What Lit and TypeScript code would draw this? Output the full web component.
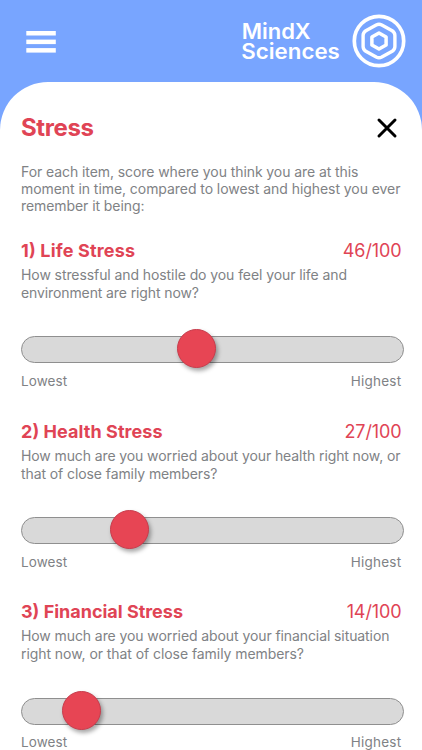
import { LitElement, html, svg, css } from "lit";
import { customElement, property } from "lit/decorators.js";

const svgLine = (text: string, width: number, y: number) =>
  svg`<text class="copy" x="0" y=${y} textLength=${width}>${text}</text>`;

@customElement("stress-slider")
class StressSlider extends LitElement {
  @property() heading = "";
  @property({ type: Array }) lines: { text: string; width: number }[] = [];
  @property({ type: Number }) level = 0;
  @property({ type: Number }) headingWidth = 100;

  static styles = css`
    :host { display: block; height: 180.6px; }
    .head { display: flex; justify-content: space-between; height: 24px; line-height: 23px; color: #e04455; padding-right: 3.5px; }
    .score { font-size: 18px; font-weight: 400; letter-spacing: -0.1px; }
    svg { display: block; overflow: visible; }
    .copy { fill: #808285; font-size: 14px; }
    .title-text { fill: #e04455; font-size: 18px; font-weight: 700; }
    .track { box-sizing: border-box; position: relative; width: 382.5px; height: 27px; margin: 38.2px 0 0 0.3px; border: 1.3px solid #8f8f8f; border-radius: 14px; background: #d9d9d9; }
    .thumb { box-sizing: border-box; position: absolute; top: -8px; width: 39px; height: 39px; border-radius: 50%; background: #e74554; border: 1.5px solid #c83c4c; box-shadow: 2px 3px 4px rgba(0, 0, 0, 0.35); }
    .ends { display: flex; justify-content: space-between; margin-top: 9.7px; font-size: 13.5px; line-height: 17px; color: #808285; padding-right: 3.6px; }
    .low { letter-spacing: 0.1px; }
    .high { letter-spacing: 0.25px; }
  `;

  render() {
    return html`
      <div class="head">
        <svg width="240" height="24"><text class="title-text" x="0" y="17.8" textLength=${this.headingWidth}>${this.heading}</text></svg>
        <span class="score">${Math.round(this.level)}/100</span>
      </div>
      <svg width="380" height="35">
        ${this.lines.map((l, i) => svgLine(l.text, l.width, 17.4 + i * 17.2))}
      </svg>
      <div class="track"><div class="thumb" style="left:${this.level * 3.59 - 10.4}px"></div></div>
      <div class="ends"><span class="low">Lowest</span><span class="high">Highest</span></div>
    `;
  }
}

@customElement("app-root")
class AppRoot extends LitElement {
  static styles = css`
    :host { display: block; width: 422px; height: 750px; overflow: hidden; background: #78a5ff; font-family: Inter, "Liberation Sans", sans-serif; }
    header { box-sizing: border-box; height: 82px; display: flex; justify-content: space-between; padding: 14px 16px 0 26px; }
    svg { display: block; overflow: visible; }
    .menu { margin-top: 16.7px; }
    .brand { display: flex; gap: 13px; }
    .logo-text { fill: #fff; font-size: 21px; font-weight: 600; }
    main { box-sizing: border-box; height: 680px; background: #fff; border-radius: 48px 48px 0 0; padding: 32px 17px 0 21px; }
    .top { display: flex; justify-content: space-between; height: 46px; }
    .title { fill: #e04455; font-size: 24px; font-weight: 700; }
    .close { margin: 4px 8.3px 0 0; }
    .copy { fill: #808285; font-size: 14px; }
    .intro { margin-bottom: 21.2px; }
  `;

  render() {
    return html`
      <header>
        <svg class="menu" width="30" height="22" fill="#fff">
          <rect x="0.3" width="29.5" height="4.5" /><rect x="0.3" y="8.6" width="29.5" height="4.5" /><rect x="0.3" y="17.1" width="29.5" height="4.5" />
        </svg>
        <div class="brand">
          <svg width="98" height="54">
            <text class="logo-text" x="0.7" y="24.6" textLength="69" lengthAdjust="spacingAndGlyphs">MindX</text>
            <text class="logo-text" x="0.3" y="44.8" textLength="98.5" lengthAdjust="spacingAndGlyphs">Sciences</text>
          </svg>
          <svg width="54" height="54" viewBox="0 0 54 54" fill="none" stroke="#fff" stroke-linejoin="round">
            <circle cx="27" cy="27" r="24.7" stroke-width="3.7" />
            <path d="M24.2 10.9Q27 9.5 29.8 10.9L40.2 16.7Q42.9 18.4 42.9 21.4V32.6Q42.9 35.6 40.2 37.3L29.8 43.1Q27 44.5 24.2 43.1L13.8 37.3Q11.1 35.6 11.1 32.6V21.4Q11.1 18.4 13.8 16.7Z" stroke-width="3.4" />
            <path d="M27 18.9L34.1 23V31L27 35.1L19.9 31V23Z" stroke-width="3.5" />
          </svg>
        </div>
      </header>
      <main>
        <div class="top">
          <svg width="80" height="30"><text class="title" x="0" y="22" textLength="73">Stress</text></svg>
          <svg class="close" width="20" height="20" fill="none" stroke="#000" stroke-width="3" stroke-linecap="round"><path d="M2 2L18 18M18 2L2 18" /></svg>
        </div>
        <svg class="intro" width="380" height="58">
          ${svgLine("For each item, score where you think you are at this", 337.5, 17)}
          ${svgLine("moment in time, compared to lowest and highest you ever", 379.5, 34.2)}
          ${svgLine("remember it being:", 123.5, 51.4)}
        </svg>
        <stress-slider heading="1) Life Stress" .headingWidth=${114} .level=${46}
          .lines=${[{ text: "How stressful and hostile do you feel your life and", width: 326 }, { text: "environment are right now?", width: 178 }]}></stress-slider>
        <stress-slider heading="2) Health Stress" .headingWidth=${141.5} .level=${27.2}
          .lines=${[{ text: "How much are you worried about your health right now, or", width: 379.5 }, { text: "that of close family members?", width: 196.5 }]}></stress-slider>
        <stress-slider heading="3) Financial Stress" .headingWidth=${162} .level=${14}
          .lines=${[{ text: "How much are you worried about your financial situation", width: 368.5 }, { text: "right now, or that of close family members?", width: 283 }]}></stress-slider>
      </main>
    `;
  }
}
